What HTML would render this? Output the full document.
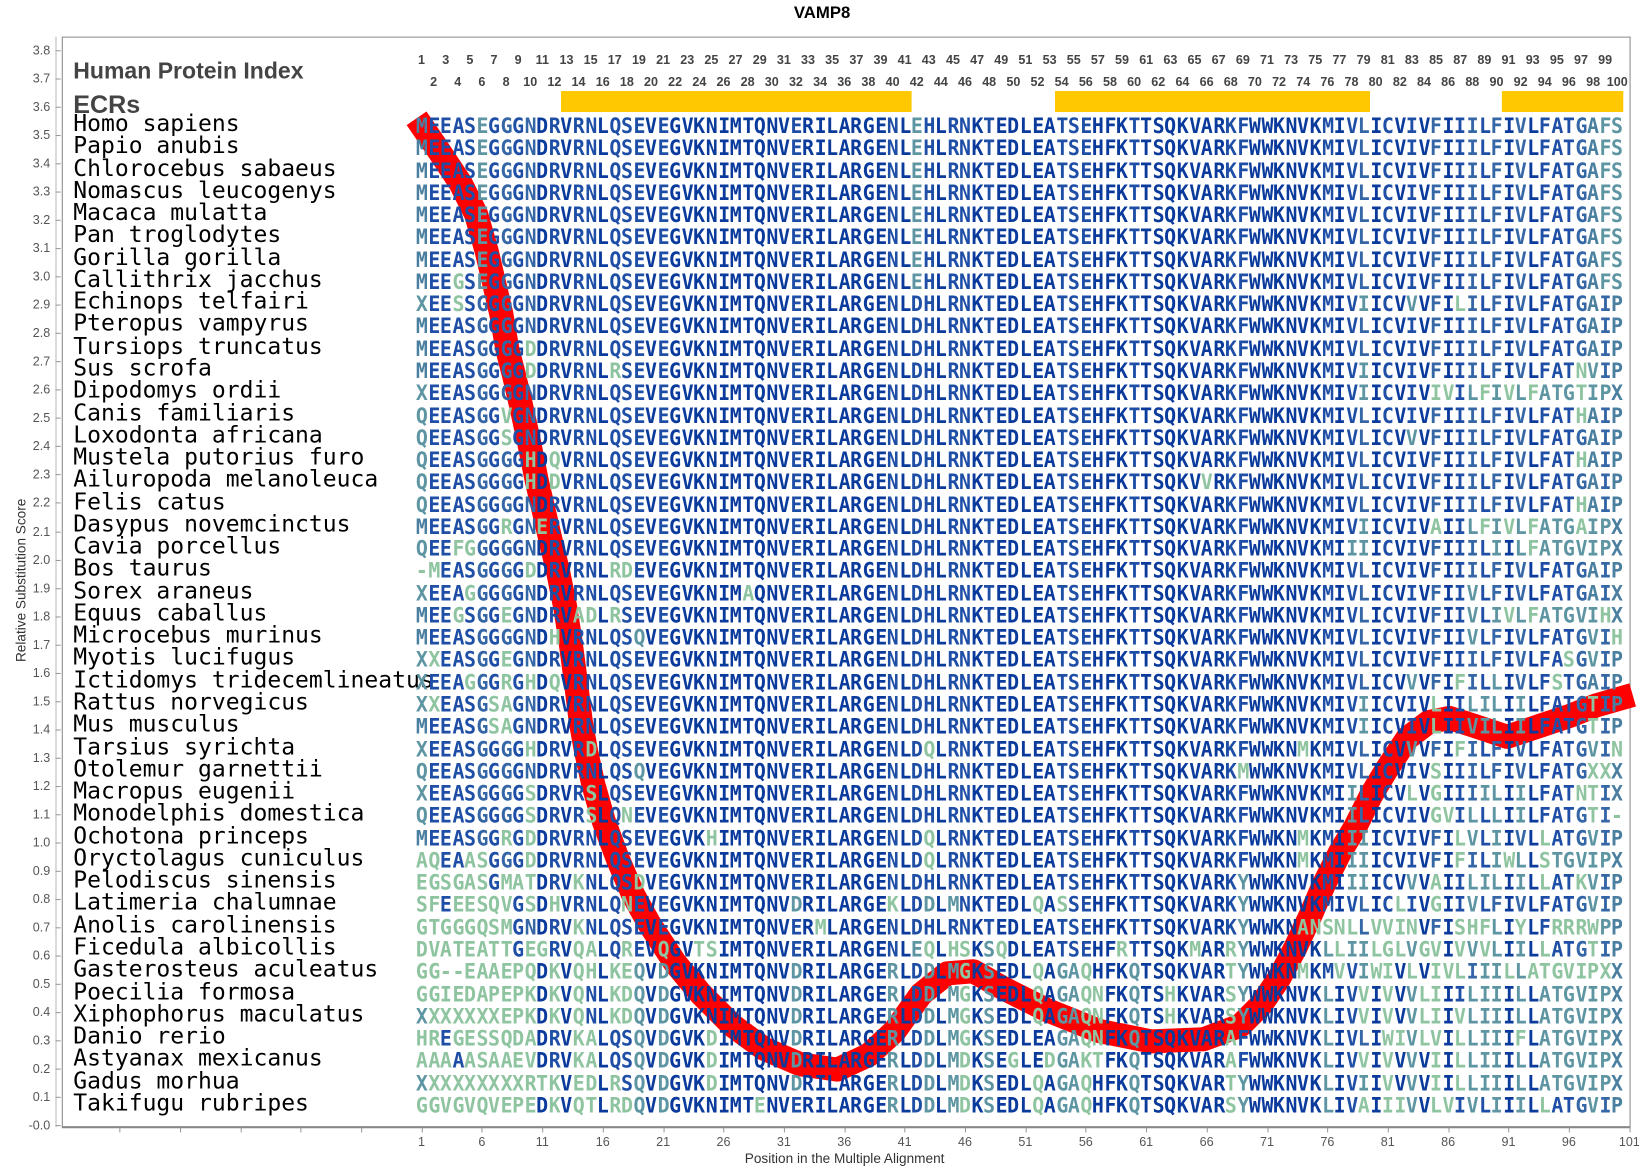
<!DOCTYPE html>
<html><head><meta charset="utf-8">
<style>
html,body{margin:0;padding:0;background:#fff;}
body{width:1641px;height:1175px;position:relative;overflow:hidden;font-family:"Liberation Sans",sans-serif;}
#wrap{position:absolute;left:0;top:0;width:1568px;height:1123px;transform:scale(1.0466);transform-origin:0 0;}
.abs{position:absolute;}
.ylab{position:absolute;right:1520px;font-size:12px;color:#555;transform:translateY(-50%);}
.sp{position:absolute;left:70px;font-family:"DejaVu Sans Mono",monospace;font-size:22px;color:#000;line-height:22px;white-space:nowrap;}
.num{position:absolute;font-size:12px;font-weight:bold;color:#444;transform:translateX(-50%);}
.xl{position:absolute;top:1084px;font-size:12px;color:#555;transform:translateX(-50%);}
.c{position:absolute;width:12px;text-align:center;font-family:"DejaVu Sans Mono",monospace;font-weight:bold;font-size:20px;line-height:22px;}
.c span{display:inline-block;transform:scaleX(0.95);}
</style></head><body>
<div id="wrap">
<div class="abs" style="left:0;width:1571px;top:4px;text-align:center;font-weight:bold;font-size:16px;">VAMP8</div>
<div class="abs" style="left:59px;top:35px;width:1497px;height:1040px;border:1px solid #888;border-bottom:2px solid #888;"></div>
<div class="abs" style="left:53px;top:35px;width:1px;height:1042px;background:#bbb;"></div>
<div id="yax"></div>
<div class="abs" style="left:-70px;top:547px;width:180px;text-align:center;transform:rotate(-90deg);font-size:13px;color:#333;">Relative Substitution Score</div>
<div class="abs" style="left:600px;width:414px;top:1099px;text-align:center;font-size:13px;color:#333;">Position in the Multiple Alignment</div>
<div id="xax"></div>
<div class="abs" style="left:70px;top:55px;font-size:22px;font-weight:bold;color:#444;">Human Protein Index</div>
<div class="abs" style="left:70px;top:87px;font-size:24px;font-weight:bold;color:#444;">ECRs</div>
<div class="abs" style="left:536px;top:87px;width:335px;height:20px;background:#ffc800;"></div>
<div class="abs" style="left:1008px;top:87px;width:301px;height:20px;background:#ffc800;"></div>
<div class="abs" style="left:1435px;top:87px;width:116px;height:20px;background:#ffc800;"></div>
<div id="nums"></div>
<svg class="abs" style="left:0;top:0" width="1568" height="1123">
<polyline fill="none" stroke="#ff0000" stroke-width="23" stroke-linejoin="round" stroke-linecap="butt" points="398,113 420,145 440,175 455,205 465,240 472,270 479,300 485,335 491,358 498,388 505,420 513,460 520,490 527,520 533,545 540,580 545,612 550,650 555,690 560,718 567,750 577,785 590,820 605,855 620,882 645,920 670,950 700,980 730,1002 765,1017 800,1022 830,1008 855,985 880,950 905,930 930,928 960,945 1000,965 1050,985 1100,995 1150,993 1185,980 1205,960 1222,935 1238,905 1252,875 1265,845 1280,815 1295,790 1310,760 1325,735 1345,705 1365,690 1385,686 1410,694 1440,704 1470,694 1500,684 1525,674 1560,664"/>
</svg>
<div id="rows"></div>
</div>
<script>
var data=[
["Homo sapiens","MEEASEGGGNDRVRNLQSEVEGVKNIMTQNVERILARGENLEHLRNKTEDLEATSEHFKTTSQKVARKFWWKNVKMIVLICVIVFIIILFIVLFATGAFS"],
["Papio anubis","MEEASEGGGNDRVRNLQSEVEGVKNIMTQNVERILARGENLEHLRNKTEDLEATSEHFKTTSQKVARKFWWKNVKMIVLICVIVFIIILFIVLFATGAFS"],
["Chlorocebus sabaeus","MEEASEGGGNDRVRNLQSEVEGVKNIMTQNVERILARGENLEHLRNKTEDLEATSEHFKTTSQKVARKFWWKNVKMIVLICVIVFIIILFIVLFATGAFS"],
["Nomascus leucogenys","MEEASEGGGNDRVRNLQSEVEGVKNIMTQNVERILARGENLEHLRNKTEDLEATSEHFKTTSQKVARKFWWKNVKMIVLICVIVFIIILFIVLFATGAFS"],
["Macaca mulatta","MEEASEGGGNDRVRNLQSEVEGVKNIMTQNVERILARGENLEHLRNKTEDLEATSEHFKTTSQKVARKFWWKNVKMIVLICVIVFIIILFIVLFATGAFS"],
["Pan troglodytes","MEEASEGGGNDRVRNLQSEVEGVKNIMTQNVERILARGENLEHLRNKTEDLEATSEHFKTTSQKVARKFWWKNVKMIVLICVIVFIIILFIVLFATGAFS"],
["Gorilla gorilla","MEEASEGGGNDRVRNLQSEVEGVKNIMTQNVERILARGENLEHLRNKTEDLEATSEHFKTTSQKVARKFWWKNVKMIVLICVIVFIIILFIVLFATGAFS"],
["Callithrix jacchus","MEEGSEGGGNDRVRNLQSEVEGVKNIMTQNVERILARGENLEHLRNKTEDLEATSEHFKTTSQKVARKFWWKNVKMIVLICVIVFIIILFIVLFATGAFS"],
["Echinops telfairi","XEESSGGGGNDRVRNLQSEVEGVKNIMTQNVERILARGENLDHLRNKTEDLEATSEHFKTTSQKVARKFWWKNVKMIVIICVVVFILILFIVLFATGAIP"],
["Pteropus vampyrus","MEEASGGGGNDRVRNLQSEVEGVKNIMTQNVERILARGENLDHLRNKTEDLEATSEHFKTTSQKVARKFWWKNVKMIVLICVIVFIIILFIVLFATGAIP"],
["Tursiops truncatus","MEEASGGGGDDRVRNLQSEVEGVKNIMTQNVERILARGENLDHLRNKTEDLEATSEHFKTTSQKVARKFWWKNVKMIVLICVIVFIIILFIVLFATGAIP"],
["Sus scrofa","MEEASGGGGDDRVRNLRSEVEGVKNIMTQNVERILARGENLDHLRNKTEDLEATSEHFKTTSQKVARKFWWKNVKMIVIICVIVFIIILFIVLFATNVIP"],
["Dipodomys ordii","XEEASGGGGNDRVRNLQSEVEGVKNIMTQNVERILARGENLDHLRNKTEDLEATSEHFKTTSQKVARKFWWKNVKMIVIICVIVIVILFIVLFATGTIP"],
["Canis familiaris","QEEASGGVGNDRVRNLQSEVEGVKNIMTQNVERILARGENLDHLRNKTEDLEATSEHFKTTSQKVARKFWWKNVKMIVLICVIVFIIILFIVLFATHAIP"],
["Loxodonta africana","QEEASGGSGNDRVRNLQSEVEGVKNIMTQNVERILARGENLDHLRNKTEDLEATSEHFKTTSQKVARKFWWKNVKMIVLICVVVFIIILFIVLFATGAIP"],
["Mustela putorius furo","QEEASGGGGHDQVRNLQSEVEGVKNIMTQNVERILARGENLDHLRNKTEDLEATSEHFKTTSQKVARKFWWKNVKMIVLICVIVFIIILFIVLFATHAIP"],
["Ailuropoda melanoleuca","QEEASGGGGHDDVRNLQSEVEGVKNIMTQNVERILARGENLDHLRNKTEDLEATSEHFKTTSQKVVRKFWWKNVKMIVLICVIVFIIILFIVLFATGAIP"],
["Felis catus","QEEASGGGGNDRVRNLQSEVEGVKNIMTQNVERILARGENLDHLRNKTEDLEATSEHFKTTSQKVARKFWWKNVKMIVLICVIVFIIILFIVLFATHAIP"],
["Dasypus novemcinctus","MEEASGGRGNERVRNLQSEVEGVKNIMTQNVERILARGENLDHLRNKTEDLEATSEHFKTTSQKVARKFWWKNVKMIVIICVIVAIILFIVLFATGAIP"],
["Cavia porcellus","QEEFGGGGGNDRVRNLQSEVEGVKNIMTQNVERILARGENLDHLRNKTEDLEATSEHFKTTSQKVARKFWWKNVKMIIIICVIVFIIILIILFATGVIP"],
["Bos taurus","-MEASGGGGDDRVRNLRDEVEGVKNIMTQNVERILARGENLDHLRNKTEDLEATSEHFKTTSQKVARKFWWKNVKMIVLICVIVFIIILFIVLFATGAIP"],
["Sorex araneus","XEEAGGGGGNDRVRNLQSEVEGVKNIMAQNVERILARGENLDHLRNKTEDLEATSEHFKTTSQKVARKFWWKNVKMIVLICVIVFIIVLFIVLFATGAIX"],
["Equus caballus","MEEGSGGEGNDRVADLRSEVEGVKNIMTQNVERILARGENLDHLRNKTEDLEATSEHFKTTSQKVARKFWWKNVKMIVLICVIVFIIVLIVLFATGVIH"],
["Microcebus murinus","MEEASGGGGNDHVRNLQSQVEGVKNIMTQNVERILARGENLDHLRNKTEDLEATSEHFKTTSQKVARKFWWKNVKMIVLICVIVFIIVLFIVLFATGVIH"],
["Myotis lucifugus","XXEASGGEGNDRVRNLQSEVEGVKNIMTQNVERILARGENLDHLRNKTEDLEATSEHFKTTSQKVARKFWWKNVKMIVLICVIVFIIILFIVLFASGVIP"],
["Ictidomys tridecemlineatus","XEEAGGGRGHDQVRNLQSEVEGVKNIMTQNVERILARGENLDHLRNKTEDLEATSEHFKTTSQKVARKFWWKNVKMIVLICVVVFIFILLIVLFSTGAIP"],
["Rattus norvegicus","XXEASGSAGNDRVRNLQSEVEGVKNIMTQNVERILARGENLDHLRNKTEDLEATSEHFKTTSQKVARKFWWKNVKMIVIICVIVLIILILIILFATGTIP"],
["Mus musculus","MEEASGSAGNDRVRNLQSEVEGVKNIMTQNVERILARGENLDHLRNKTEDLEATSEHFKTTSQKVARKFWWKNVKMIVIICVIVLIIVILIILFATGTIP"],
["Tarsius syrichta","XEEASGGGGHDRVRDLQSEVEGVKNIMTQNVERILARGENLDQLRNKTEDLEATSEHFKTTSQKVARKFWWKNMKMIVLICVVVFIFILFIVLFATGVIN"],
["Otolemur garnettii","QEEASGGGGNDRVRNLQSQVEGVKNIMTQNVERILARGENLDHLRNKTEDLEATSEHFKTTSQKVARKMWWKNVKMIVLICVIVSIIILFIVLFATGXXX"],
["Macropus eugenii","XEEASGGGGSDRVRSLQSEVEGVKNIMTQNVERILARGENLDHLRNKTEDLEATSEHFKTTSQKVARKFWWKNVKMIILICVLVGIIIILIILFATNTIX"],
["Monodelphis domestica","QEEASGGGGSDRVRSLQNEVEGVKNIMTQNVERILARGENLDHLRNKTEDLEATSEHFKTTSQKVARKFWWKNVKMIILICVIVGVILLLIILFATGTI-"],
["Ochotona princeps","MEEASGGRGDDRVRNLQSEVEGVKHIMTQNVERILARGENLDQLRNKTEDLEATSEHFKTTSQKVARKFWWKNMKMIIIICVIVFILVLIIVLLATGVIP"],
["Oryctolagus cuniculus","AQEAASGGGDDRVRNLQSEVEGVKNIMTQNVERILARGENLDQLRNKTEDLEATSEHFKTTSQKVARKFWWKNMKMIIIICVIVFIFILIWLLSTGVIP"],
["Pelodiscus sinensis","EGSGASGMATDRVKNLQSDVEGVKNIMTQNVERILARGENLDHLRNKTEDLEATSEHFKTTSQKVARKYWWKNVKMIIIICVVVAIILILIILLATKVIP"],
["Latimeria chalumnae","SFEEESQVGSDHVRNLQNEVEGVKNIMTQNVDRILARGEKLDDLMNKTEDLQASSEHFKTTSQKVARKYWWKNVKMIVLICLIVGIIVLFIVLFATGVIP"],
["Anolis carolinensis","GTGGGQSMGNDRVKNLQSEVEGVKNIMTQNVERMLARGENLDHLRNKTEDLEATSEHFKTTSQKVARKYWWKNANSNLLVVINVFISHFLIYLFRRRWPP"],
["Ficedula albicollis","DVATEATTGEGRVQALQREVQGVTSIMTQNVERILARGENLEQLHSKSQDLEATSEHFRTTSQKMARRYWWKNVKLLIILGLVGVIVVVLIILLATGTIP"],
["Gasterosteus aculeatus","GG--EAAEPQDKVQHLKEQVDGVKNIMTQNVDRILARGERLDDLMGKSEDLQAGAQHFKQTSQKVARTYWWKNMKMVVIWIVLVIVLIIILLATGVIP"],
["Poecilia formosa","GGIEDAPEPKDKVQNLKDQVDGVKNIMTQNVDRILARGERLDDLMGKSEDLQAGAQNFKQTSHKVARSYWWKNVKLIVVIVVVLIIILIIILLATGVIP"],
["Xiphophorus maculatus","XXXXXXXEPKDKVQNLKDQVDGVKNIMTQNVDRILARGERLDDLMGKSEDLQAGAQNFKQTSHKVARSYWWKNVKLIVVIVVVLIIVLIIILLATGVIP"],
["Danio rerio","HREGESSQDADRVKALQSQVDGVKDIMTQNVDRILARGERLDDLMGKSEDLEAGAQNFKQTSQKVARAFWWKNVKLIVLIWIVLVILLIIIFLATGVIP"],
["Astyanax mexicanus","AAAAASAAEVDRVKALQSQVDGVKDIMTQNVDRILARGERLDDLMDKSEGLEDGAKTFKQTSQKVARAFWWKNVKLIVVIVVVVIILLIIILLATGVIP"],
["Gadus morhua","XXXXXXXXXRTKVEDLRSQVDGVKDIMTQNVDRILARGERLDDLMDKSEDLQAGAQHFKQTSQKVARTYWWKNVKLIVIIVVVVIILLIIILLATGVIP"],
["Takifugu rubripes","GGVGVQVEPEDKVQTLRDQVDGVKNIMTENVERILARGERLDDLMDKSEDLQAGAQHFKQTSQKVARSYWWKNVKLIVAIIIVVLVIVLIIILLATGVIP"]
];
var CW=11.54,X0=397,Y0=120,RH=21.27,h="";
for(var i=0;i<=38;i++){var v=(3.8-i*0.1).toFixed(1),y=48+i*27.03;
h+='<div class="ylab" style="top:'+y+'px">'+v+'</div><div class="abs" style="left:53px;top:'+y+'px;width:5px;height:1px;background:#999"></div>';}
document.getElementById("yax").innerHTML=h;h="";
for(var k=-6;k<=20;k++){var x=X0+(k*5+0.5)*CW;if(x<60)continue;
h+='<div class="abs" style="left:'+x+'px;top:1077px;width:1px;height:5px;background:#999"></div>';
if(k>=0)h+='<div class="xl" style="left:'+x+'px">'+(k*5+1)+'</div>';}
document.getElementById("xax").innerHTML=h;h="";
for(var n=1;n<=100;n++){var x=X0+(n-0.5)*CW;h+='<div class="num" style="left:'+x+'px;top:'+(n%2?50:71)+'px">'+n+'</div>';}
document.getElementById("nums").innerHTML=h;h="";
var seqs=data.map(function(d){var s=d[1];while(s.length<100)s+="X";return s.slice(0,100);});
for(var r=0;r<data.length;r++){var y=Y0+r*RH;
h+='<div class="sp" style="top:'+(y-12)+'px">'+data[r][0]+'</div>';}
for(var c=0;c<100;c++){var cnt={};seqs.forEach(function(s){cnt[s[c]]=(cnt[s[c]]||0)+1;});
for(var r=0;r<seqs.length;r++){var ch=seqs[r][c],f=cnt[ch]/seqs.length,col;
if(f>0.85)col="#0a3a9c";else if(f>0.65)col="#1e4ea6";else if(f>0.45)col="#3566a6";else if(f>0.3)col="#4a7fa0";else if(f>0.15)col="#5e95a2";else col="#8fc4a0";
var x=X0+c*CW,y=Y0+r*RH;
h+='<div class="c" style="left:'+x+'px;top:'+(y-11)+'px;color:'+col+'"><span>'+ch+'</span></div>';}}
document.getElementById("rows").innerHTML=h;
</script>
</body></html>
